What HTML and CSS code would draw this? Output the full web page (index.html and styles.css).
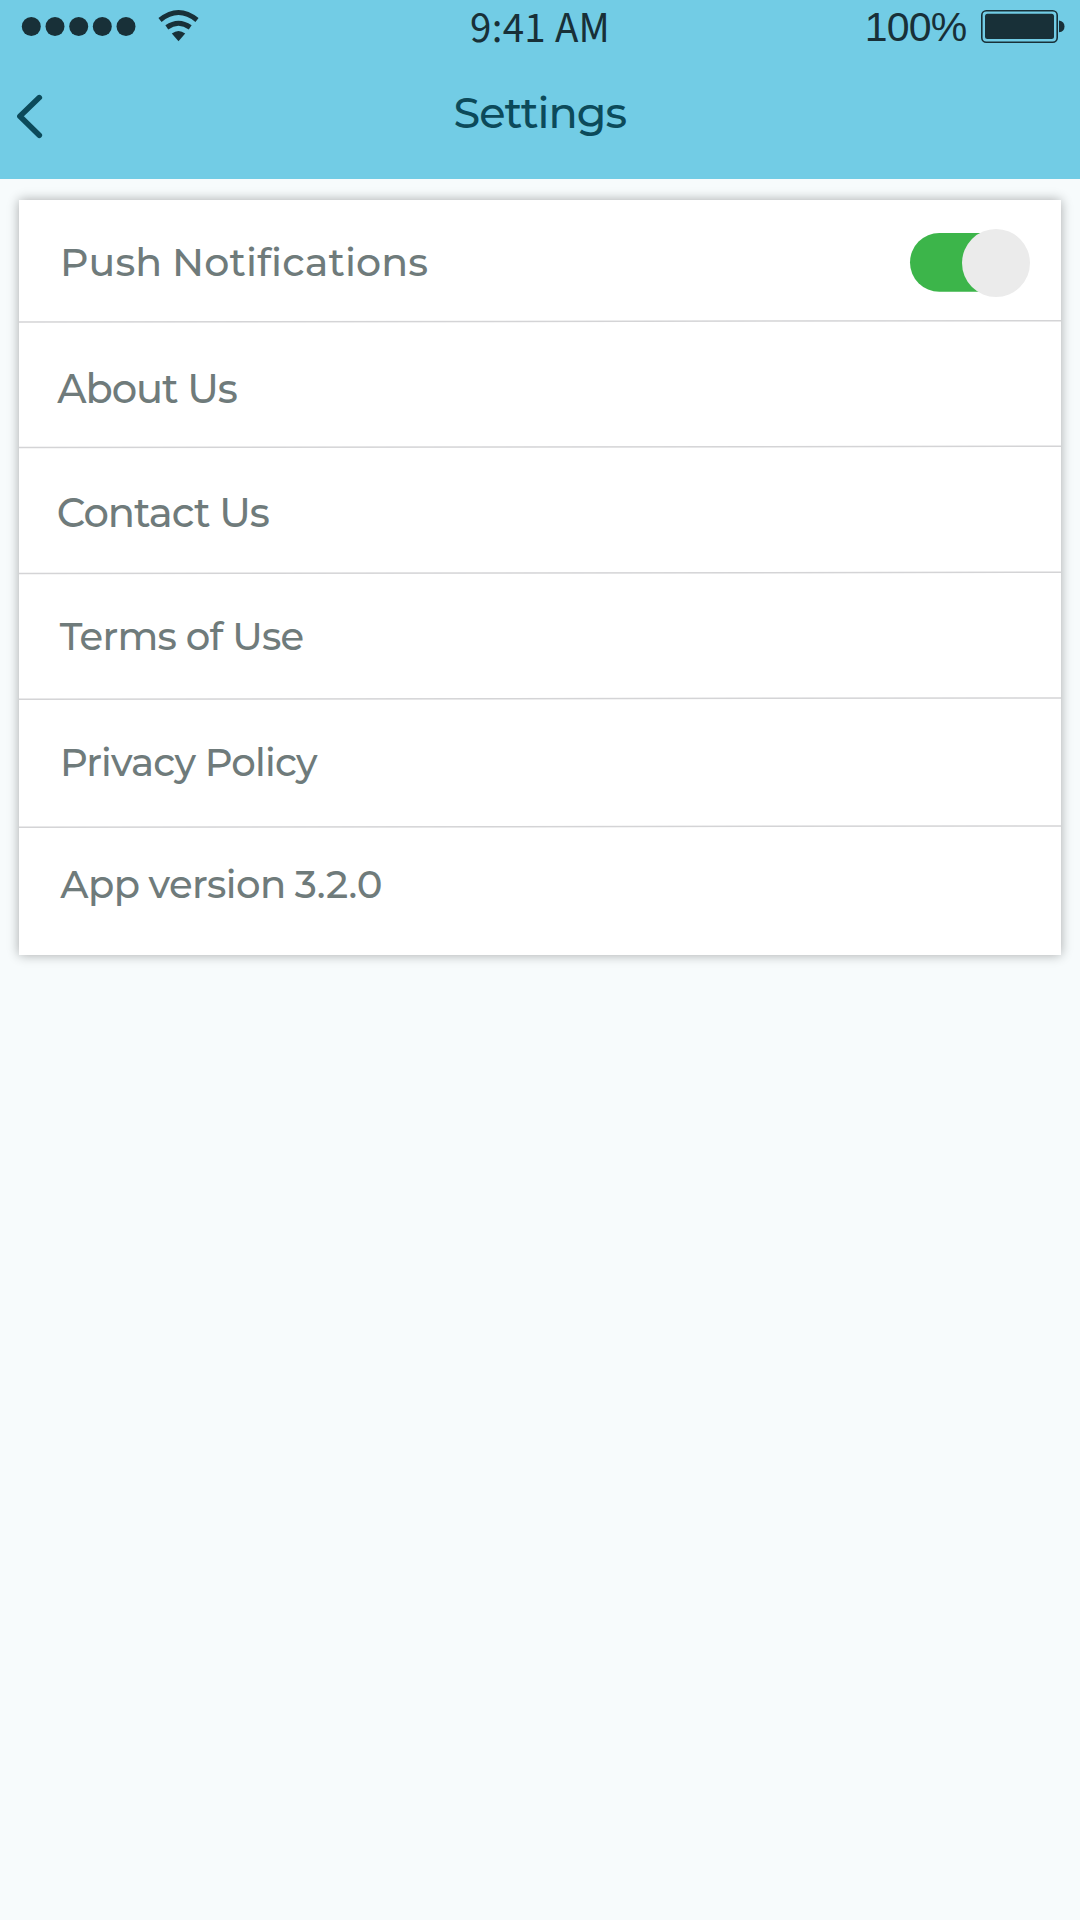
FILE: index.html
```
<!DOCTYPE html>
<html lang="en">
<head>
<meta charset="utf-8">
<title>Settings</title>
<link rel="stylesheet" href="styles.css">
</head>
<body>
<header class="header">
  <div class="status">
    <div class="status-left">
      <svg class="signal" width="116" height="20" viewBox="21 17 116 20">
        <circle cx="31.3" cy="26.5" r="9.5"/><circle cx="55" cy="26.5" r="9.5"/><circle cx="78.7" cy="26.5" r="9.5"/><circle cx="102.3" cy="26.5" r="9.5"/><circle cx="126" cy="26.5" r="9.5"/>
      </svg>
      <svg class="wifi" width="42" height="33" viewBox="158 9 42 33">
        <path class="arc" d="M160 20Q178.5 5 197 20"/>
        <path class="arc" d="M166.8 27.4Q178.5 19.2 190.2 27.4"/>
        <path d="M171.8 33.6Q178.5 28.6 185.2 33.6L178.5 41.2Z"/>
      </svg>
    </div>
    <div class="time">9:41 AM</div>
    <div class="status-right">
      <span class="percent">100%</span>
      <svg class="battery" width="86" height="36" viewBox="980 8 86 36">
        <rect class="case" x="981.8" y="10.8" width="75.4" height="31.4" rx="4.5"/>
        <rect x="985" y="13.8" width="69" height="25.2" rx="2.5"/>
        <path d="M1059 20.5Q1064.5 21.5 1064.5 26.5T1059 32.3Z"/>
      </svg>
    </div>
  </div>
  <nav class="navbar">
    <svg class="back" width="30" height="50" viewBox="14 91 30 50"><path d="M39.3 97.6L19.9 116.2L39.3 135.2"/></svg>
    <h1 class="title">Settings</h1>
  </nav>
</header>
<main class="card">
  <div class="row push">
    <span class="label">Push Notifications</span>
    <svg class="toggle" width="122" height="70" viewBox="909 228 122 70">
      <rect class="track" x="910" y="233" width="112" height="58.8" rx="29.4"/>
      <circle class="knob" cx="996" cy="263" r="34"/>
    </svg>
  </div>
  <svg class="divider" width="1042" height="4"><path d="M0 3L1042 1.7"/></svg>
  <div class="row about"><span class="label">About Us</span></div>
  <svg class="divider" width="1042" height="4"><path d="M0 2.6L1042 1.3"/></svg>
  <div class="row contact"><span class="label">Contact Us</span></div>
  <svg class="divider" width="1042" height="4"><path d="M0 2.6L1042 1.3"/></svg>
  <div class="row terms"><span class="label">Terms of Use</span></div>
  <svg class="divider" width="1042" height="4"><path d="M0 2.3L1042 1"/></svg>
  <div class="row privacy"><span class="label">Privacy Policy</span></div>
  <svg class="divider" width="1042" height="4"><path d="M0 2.3L1042 1"/></svg>
  <div class="row version"><span class="label">App version <span class="number">3.2.0</span></span></div>
</main>
</body>
</html>
```
FILE: styles.css
```
* { box-sizing: border-box; }

body {
  margin: 0;
  min-height: 1920px;
  background: #f7fbfc;
  font-family: Montserrat, Inter, "Liberation Sans", sans-serif;
  font-weight: 500;
}

svg { display: block; flex: none; }

.header { height: 179px; background: #72cce5; }

.status {
  display: grid;
  grid-template-columns: 470px 1fr auto;
  height: 53px;
  color: #183038;
  fill: #183038;
}

.status-left { display: flex; align-items: flex-start; padding-left: 21px; }
.signal { margin-top: 17px; }
.wifi { margin: 9px 0 0 21px; }
.arc { fill: none; stroke: #183038; stroke-width: 5; }

.time {
  padding-top: 2px;
  font: 400 43px/54px "Source Sans 3", "Open Sans", sans-serif;
  letter-spacing: 0.3px;
  white-space: nowrap;
}

.status-right { display: flex; align-items: flex-start; padding-right: 14px; }
.percent {
  width: 115.3px;
  font: 400 41px/54px "Liberation Sans", Arial, sans-serif;
  letter-spacing: -0.8px;
}
.battery { margin-top: 8px; }
.case { fill: none; stroke: #183038; stroke-width: 1.6; }

.navbar { display: flex; padding-left: 14px; }
.back { margin-top: 38px; }
.back path {
  fill: none;
  stroke: #0c4a5a;
  stroke-width: 5.6;
  stroke-linecap: round;
  stroke-linejoin: round;
}
.title {
  margin: 35.5px 0 0 409.5px;
  color: #0c4a5a;
  font-size: 43px;
  font-weight: 500;
  line-height: 48px;
  letter-spacing: -1px;
}

.card {
  width: 1042px;
  height: 755px;
  margin: 21px 19px 0;
  background: #fff;
  box-shadow: 0 0 11px rgba(0, 0, 0, 0.33);
}

.row {
  display: flex;
  height: 122px;
  color: #6f7b7b;
  font-size: 38.6px;
  line-height: 48px;
  white-space: nowrap;
}

.divider path { fill: none; stroke: #d4d4d6; stroke-width: 1.5; }

.push { height: 119px; padding: 38px 30px 0 41px; justify-content: space-between; font-size: 39.5px; letter-spacing: 0.1px; word-spacing: -1px; }
.toggle { margin-top: -10px; }
.track { fill: #3cb54a; }
.knob { fill: #ebebeb; }

.about { padding: 42px 0 0 38.3px; font-size: 40px; letter-spacing: -1.07px; }
.contact { padding: 40px 0 0 37.8px; font-size: 40px; letter-spacing: -1px; }
.terms { padding: 37.5px 0 0 40.8px; letter-spacing: -0.7px; }
.privacy { height: 124px; padding: 37.5px 0 0 41px; letter-spacing: -0.8px; }
.version { height: 126px; padding: 31.5px 0 0 41.3px; letter-spacing: -0.6px; word-spacing: -0.6px; }
.number { letter-spacing: 0; }
```
